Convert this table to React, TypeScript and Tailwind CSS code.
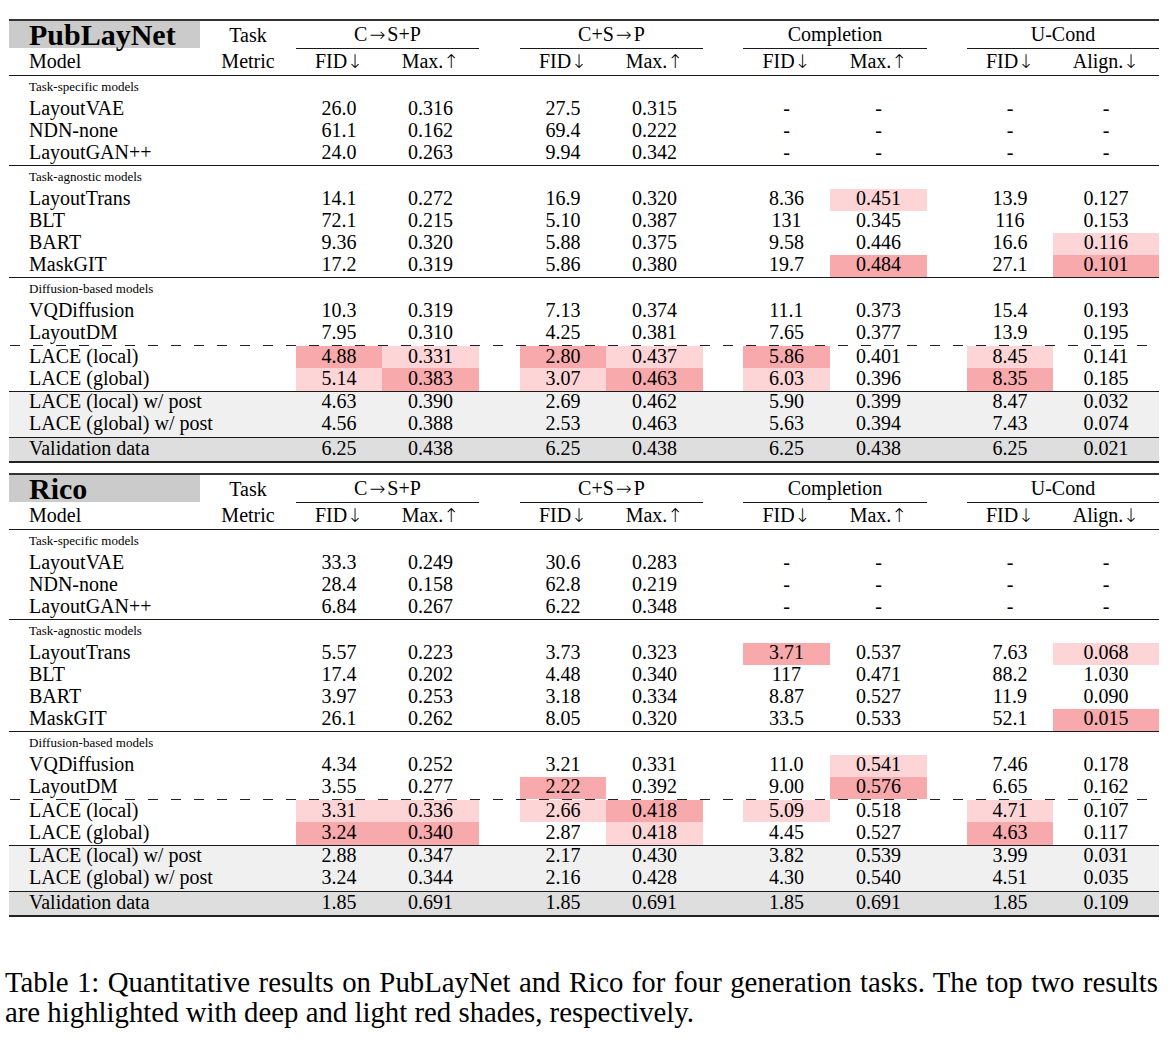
import React from 'react';

type Hl = '' | 'D' | 'L';
type RowData = { name: string; vals: string[]; hl?: Hl[] };
type Group = { label?: string; rows: RowData[] };

const GRID = 'grid grid-cols-[191px_96px_86px_97px_41px_86px_97px_40px_87px_97px_40px_86px_106px]';
const DEEP = 'bg-[#f8a9ab]';
const LIGHT = 'bg-[#fdd5d7]';

// value column index -> grid column (skipping task column and gaps)
const COLS = [2, 3, 5, 6, 8, 9, 11, 12];

const hlClass = (h?: Hl) => (h === 'D' ? DEEP : h === 'L' ? LIGHT : '');

const Arr = ({ c }: { c: string }) => (
  <span className="font-['DejaVu_Sans',sans-serif] font-extralight text-[19px]">{c}</span>
);

const TASKS: React.ReactNode[] = [
  <>C<span className="px-[2px] font-['DejaVu_Sans',sans-serif] font-extralight text-[19px]">→</span>S+P</>,
  <>C+S<span className="px-[2px] font-['DejaVu_Sans',sans-serif] font-extralight text-[19px]">→</span>P</>,
  'Completion',
  'U-Cond',
];

function DataRow({ row, h = 'h-[22px]', lead = 'leading-[18px]' }: { row: RowData; h?: string; lead?: string }) {
  const cells: React.ReactNode[] = [];
  let vi = 0;
  for (let c = 0; c < 13; c++) {
    if (c === 0) {
      cells.push(<div key={c} className="pl-[20px] whitespace-nowrap">{row.name}</div>);
    } else if (COLS.includes(c)) {
      const i = vi++;
      cells.push(
        <div key={c} className={`text-center ${hlClass(row.hl?.[i])}`}>{row.vals[i]}</div>
      );
    } else {
      cells.push(<div key={c} />);
    }
  }
  return <div className={`${GRID} ${h} ${lead} text-[20px]`}>{cells}</div>;
}

function Label({ text }: { text: string }) {
  return <div className="h-[23px] pl-[20px] text-[13px] leading-[22px]">{text}</div>;
}

function Rule() {
  return <div className="h-px bg-[#1a1a1a]" />;
}

function Dashed() {
  return (
    <div className="h-px ml-px bg-[repeating-linear-gradient(90deg,#222_0_10px,transparent_10px_23px)]" />
  );
}

function Table({ title, groups, lace, post, valid }: {
  title: string;
  groups: Group[];
  lace: RowData[];
  post: RowData[];
  valid: RowData;
}) {
  return (
    <div className="w-[1150px]">
      <div className="h-[2px] bg-[#333]" />
      <div className={`${GRID} h-[28px] text-[20px]`}>
        <div className="h-[27px] bg-[#cbcbcb] pl-[20px] text-[30px] font-bold leading-[27px]">{title}</div>
        <div className="text-center leading-[28px]">Task</div>
        {TASKS.map((t, i) => (
          <React.Fragment key={i}>
            <div className="col-span-2 border-b border-[#1a1a1a] text-center leading-[27px]">
              {t}
            </div>
            {i < 3 && <div />}
          </React.Fragment>
        ))}
      </div>
      <div className={`${GRID} h-[26px] text-[20px] leading-[24px]`}>
        <div className="pl-[20px]">Model</div>
        <div className="text-center">Metric</div>
        <div className="text-center">FID<Arr c="↓" /></div>
        <div className="text-center">Max.<Arr c="↑" /></div>
        <div />
        <div className="text-center">FID<Arr c="↓" /></div>
        <div className="text-center">Max.<Arr c="↑" /></div>
        <div />
        <div className="text-center">FID<Arr c="↓" /></div>
        <div className="text-center">Max.<Arr c="↑" /></div>
        <div />
        <div className="text-center">FID<Arr c="↓" /></div>
        <div className="text-center">Align.<Arr c="↓" /></div>
      </div>
      {groups.map((g, gi) => (
        <React.Fragment key={gi}>
          <Rule />
          {g.label && <Label text={g.label} />}
          {g.rows.map(r => <DataRow key={r.name} row={r} />)}
        </React.Fragment>
      ))}
      <Dashed />
      <DataRow row={lace[0]} lead="leading-[20px]" />
      <DataRow row={lace[1]} h="h-[23px]" lead="leading-[20px]" />
      <Rule />
      <div className="bg-[#f0f0f0] pb-px">
        {post.map(r => <DataRow key={r.name} row={r} />)}
      </div>
      <Rule />
      <div className="bg-[#dedede]">
        <DataRow row={valid} h="h-[23px]" lead="leading-[20px]" />
      </div>
      <div className="h-[2px] bg-[#222]" />
    </div>
  );
}

const dash = ['-', '-', '-', '-'];

const pubGroups: Group[] = [
  {
    label: 'Task-specific models',
    rows: [
      { name: 'LayoutVAE', vals: ['26.0', '0.316', '27.5', '0.315', ...dash] },
      { name: 'NDN-none', vals: ['61.1', '0.162', '69.4', '0.222', ...dash] },
      { name: 'LayoutGAN++', vals: ['24.0', '0.263', '9.94', '0.342', ...dash] },
    ],
  },
  {
    label: 'Task-agnostic models',
    rows: [
      { name: 'LayoutTrans', vals: ['14.1', '0.272', '16.9', '0.320', '8.36', '0.451', '13.9', '0.127'], hl: ['', '', '', '', '', 'L', '', ''] },
      { name: 'BLT', vals: ['72.1', '0.215', '5.10', '0.387', '131', '0.345', '116', '0.153'] },
      { name: 'BART', vals: ['9.36', '0.320', '5.88', '0.375', '9.58', '0.446', '16.6', '0.116'], hl: ['', '', '', '', '', '', '', 'L'] },
      { name: 'MaskGIT', vals: ['17.2', '0.319', '5.86', '0.380', '19.7', '0.484', '27.1', '0.101'], hl: ['', '', '', '', '', 'D', '', 'D'] },
    ],
  },
  {
    label: 'Diffusion-based models',
    rows: [
      { name: 'VQDiffusion', vals: ['10.3', '0.319', '7.13', '0.374', '11.1', '0.373', '15.4', '0.193'] },
      { name: 'LayoutDM', vals: ['7.95', '0.310', '4.25', '0.381', '7.65', '0.377', '13.9', '0.195'] },
    ],
  },
];

const pubLace: RowData[] = [
  { name: 'LACE (local)', vals: ['4.88', '0.331', '2.80', '0.437', '5.86', '0.401', '8.45', '0.141'], hl: ['D', 'L', 'D', 'L', 'D', '', 'L', ''] },
  { name: 'LACE (global)', vals: ['5.14', '0.383', '3.07', '0.463', '6.03', '0.396', '8.35', '0.185'], hl: ['L', 'D', 'L', 'D', 'L', '', 'D', ''] },
];

const pubPost: RowData[] = [
  { name: 'LACE (local) w/ post', vals: ['4.63', '0.390', '2.69', '0.462', '5.90', '0.399', '8.47', '0.032'] },
  { name: 'LACE (global) w/ post', vals: ['4.56', '0.388', '2.53', '0.463', '5.63', '0.394', '7.43', '0.074'] },
];

const pubValid: RowData = { name: 'Validation data', vals: ['6.25', '0.438', '6.25', '0.438', '6.25', '0.438', '6.25', '0.021'] };

const ricoGroups: Group[] = [
  {
    label: 'Task-specific models',
    rows: [
      { name: 'LayoutVAE', vals: ['33.3', '0.249', '30.6', '0.283', ...dash] },
      { name: 'NDN-none', vals: ['28.4', '0.158', '62.8', '0.219', ...dash] },
      { name: 'LayoutGAN++', vals: ['6.84', '0.267', '6.22', '0.348', ...dash] },
    ],
  },
  {
    label: 'Task-agnostic models',
    rows: [
      { name: 'LayoutTrans', vals: ['5.57', '0.223', '3.73', '0.323', '3.71', '0.537', '7.63', '0.068'], hl: ['', '', '', '', 'D', '', '', 'L'] },
      { name: 'BLT', vals: ['17.4', '0.202', '4.48', '0.340', '117', '0.471', '88.2', '1.030'] },
      { name: 'BART', vals: ['3.97', '0.253', '3.18', '0.334', '8.87', '0.527', '11.9', '0.090'] },
      { name: 'MaskGIT', vals: ['26.1', '0.262', '8.05', '0.320', '33.5', '0.533', '52.1', '0.015'], hl: ['', '', '', '', '', '', '', 'D'] },
    ],
  },
  {
    label: 'Diffusion-based models',
    rows: [
      { name: 'VQDiffusion', vals: ['4.34', '0.252', '3.21', '0.331', '11.0', '0.541', '7.46', '0.178'], hl: ['', '', '', '', '', 'L', '', ''] },
      { name: 'LayoutDM', vals: ['3.55', '0.277', '2.22', '0.392', '9.00', '0.576', '6.65', '0.162'], hl: ['', '', 'D', '', '', 'D', '', ''] },
    ],
  },
];

const ricoLace: RowData[] = [
  { name: 'LACE (local)', vals: ['3.31', '0.336', '2.66', '0.418', '5.09', '0.518', '4.71', '0.107'], hl: ['L', 'L', 'L', 'D', 'L', '', 'L', ''] },
  { name: 'LACE (global)', vals: ['3.24', '0.340', '2.87', '0.418', '4.45', '0.527', '4.63', '0.117'], hl: ['D', 'D', '', 'L', '', '', 'D', ''] },
];

const ricoPost: RowData[] = [
  { name: 'LACE (local) w/ post', vals: ['2.88', '0.347', '2.17', '0.430', '3.82', '0.539', '3.99', '0.031'] },
  { name: 'LACE (global) w/ post', vals: ['3.24', '0.344', '2.16', '0.428', '4.30', '0.540', '4.51', '0.035'] },
];

const ricoValid: RowData = { name: 'Validation data', vals: ['1.85', '0.691', '1.85', '0.691', '1.85', '0.691', '1.85', '0.109'] };

export default function App() {
  return (
    <div className="w-[1175px] h-[1044px] bg-white text-black font-['Liberation_Serif','Times_New_Roman',serif] overflow-hidden">
      <div className="pl-[9px] pt-[19px]">
        <Table title="PubLayNet" groups={pubGroups} lace={pubLace} post={pubPost} valid={pubValid} />
        <div className="h-[10px]" />
        <Table title="Rico" groups={ricoGroups} lace={ricoLace} post={ricoPost} valid={ricoValid} />
      </div>
      <div className="pl-[5px] pt-[50px] w-[1158px] text-[28.8px] leading-[30px]">
        <div className="text-justify [text-align-last:justify] whitespace-nowrap">
          Table 1: Quantitative results on PubLayNet and Rico for four generation tasks. The top two results
        </div>
        <div>are highlighted with deep and light red shades, respectively.</div>
      </div>
    </div>
  );
}
